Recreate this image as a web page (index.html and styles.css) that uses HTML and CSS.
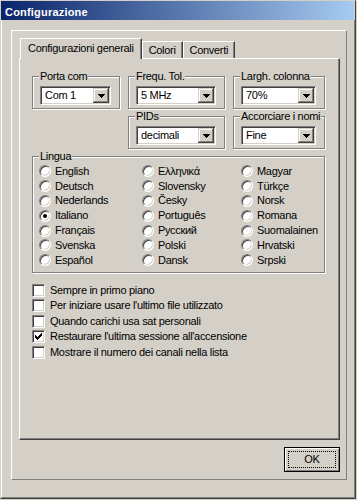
FILE: index.html
```html
<!DOCTYPE html>
<html lang="it">
<head>
    <meta charset="UTF-8">
    <meta name="viewport" content="width=device-width, initial-scale=1.0">
    <title>Configurazione</title>
    <link rel="stylesheet" href="styles.css">
</head>
<body>
    <div class="window">
        <div class="titlebar">Configurazione</div>

        <div class="client">
            <div class="sheet">
                <!-- Tab strip -->
                <div class="tabs">
                    <div class="tab active">Configurazioni generali</div>
                    <div class="tab">Colori</div>
                    <div class="tab">Converti</div>
                </div>

                <div class="page">
                    <div class="general">
                        <div class="combos">
                            <fieldset class="group">
                                <legend>Porta com</legend>
                                <div class="group-body">
                                    <div class="combo"><span class="value">Com 1</span><span class="drop"><svg width="7" height="4" viewBox="0 0 7 4"><rect x="0" y="0" width="7" height="1"/><rect x="1" y="1" width="5" height="1"/><rect x="2" y="2" width="3" height="1"/><rect x="3" y="3" width="1" height="1"/></svg></span></div>
                                </div>
                            </fieldset>
                            <fieldset class="group">
                                <legend>Frequ. Tol.</legend>
                                <div class="group-body">
                                    <div class="combo"><span class="value">5 MHz</span><span class="drop"><svg width="7" height="4" viewBox="0 0 7 4"><rect x="0" y="0" width="7" height="1"/><rect x="1" y="1" width="5" height="1"/><rect x="2" y="2" width="3" height="1"/><rect x="3" y="3" width="1" height="1"/></svg></span></div>
                                </div>
                            </fieldset>
                            <fieldset class="group">
                                <legend>Largh. colonna</legend>
                                <div class="group-body">
                                    <div class="combo"><span class="value">70%</span><span class="drop"><svg width="7" height="4" viewBox="0 0 7 4"><rect x="0" y="0" width="7" height="1"/><rect x="1" y="1" width="5" height="1"/><rect x="2" y="2" width="3" height="1"/><rect x="3" y="3" width="1" height="1"/></svg></span></div>
                                </div>
                            </fieldset>
                            <fieldset class="group pids">
                                <legend>PIDs</legend>
                                <div class="group-body">
                                    <div class="combo"><span class="value">decimali</span><span class="drop"><svg width="7" height="4" viewBox="0 0 7 4"><rect x="0" y="0" width="7" height="1"/><rect x="1" y="1" width="5" height="1"/><rect x="2" y="2" width="3" height="1"/><rect x="3" y="3" width="1" height="1"/></svg></span></div>
                                </div>
                            </fieldset>
                            <fieldset class="group">
                                <legend>Accorciare i nomi</legend>
                                <div class="group-body">
                                    <div class="combo"><span class="value">Fine</span><span class="drop"><svg width="7" height="4" viewBox="0 0 7 4"><rect x="0" y="0" width="7" height="1"/><rect x="1" y="1" width="5" height="1"/><rect x="2" y="2" width="3" height="1"/><rect x="3" y="3" width="1" height="1"/></svg></span></div>
                                </div>
                            </fieldset>
                        </div>

                        <fieldset class="group lingua">
                            <legend>Lingua</legend>
                            <div class="radios">
                                <label class="radio-row"><span class="radio"></span>English</label>
                                <label class="radio-row"><span class="radio"></span>Deutsch</label>
                                <label class="radio-row"><span class="radio"></span>Nederlands</label>
                                <label class="radio-row"><span class="radio checked"></span>Italiano</label>
                                <label class="radio-row"><span class="radio"></span>Français</label>
                                <label class="radio-row"><span class="radio"></span>Svenska</label>
                                <label class="radio-row"><span class="radio"></span>Español</label>

                                <label class="radio-row"><span class="radio"></span>Ελληνικά</label>
                                <label class="radio-row"><span class="radio"></span>Slovensky</label>
                                <label class="radio-row"><span class="radio"></span>Česky</label>
                                <label class="radio-row"><span class="radio"></span>Português</label>
                                <label class="radio-row"><span class="radio"></span>Русский</label>
                                <label class="radio-row"><span class="radio"></span>Polski</label>
                                <label class="radio-row"><span class="radio"></span>Dansk</label>

                                <label class="radio-row"><span class="radio"></span>Magyar</label>
                                <label class="radio-row"><span class="radio"></span>Türkçe</label>
                                <label class="radio-row"><span class="radio"></span>Norsk</label>
                                <label class="radio-row"><span class="radio"></span>Romana</label>
                                <label class="radio-row"><span class="radio"></span>Suomalainen</label>
                                <label class="radio-row"><span class="radio"></span>Hrvatski</label>
                                <label class="radio-row"><span class="radio"></span>Srpski</label>
                            </div>
                        </fieldset>

                        <div class="checks">
                            <label class="check-row"><span class="check"></span>Sempre in primo piano</label>
                            <label class="check-row"><span class="check"></span>Per iniziare usare l'ultimo file utilizzato</label>
                            <label class="check-row"><span class="check"></span>Quando carichi usa sat personali</label>
                            <label class="check-row"><span class="check"><svg width="7" height="7" viewBox="0 0 7 7" shape-rendering="crispEdges"><path d="M6 0h1v3h-1v1h-1v1h-1v1h-1v1h-1v-1h-1v-1h-1v-3h1v1h1v1h1v-1h1v-1h1z"/></svg></span>Restaurare l'ultima sessione all'accensione</label>
                            <label class="check-row"><span class="check"></span>Mostrare il numero dei canali nella lista</label>
                        </div>
                    </div>
                </div>

                <div class="buttons">
                    <button class="btn default"><span>OK</span></button>
                </div>
            </div>
        </div>
    </div>
</body>
</html>
```

FILE: styles.css
```css
body {
    margin: 0;
    background-color: #d4d0c8;
    font-family: "Liberation Sans", Arial, sans-serif;
    font-size: 11px;
    line-height: 13px;
    letter-spacing: -0.3px;
    color: #000;
}

.window {
    width: 356px;
    height: 499px;
    box-sizing: border-box;
    display: flex;
    flex-direction: column;
    border: 1px solid;
    border-color: #d4d0c8 #404040 #404040 #d4d0c8;
    background-color: #d4d0c8;
}

.titlebar {
    height: 19px;
    box-sizing: border-box;
    margin-right: 1px;
    padding: 3px 0 0 4px;
    line-height: 16px;
    font-weight: bold;
    letter-spacing: 0.2px;
    color: #fff;
    background: linear-gradient(to right, #0a246a, #a6caf0);
}

.client {
    flex: 1;
    display: flex;
    padding: 10px 7px 17px 9px;
    border-left: 1px solid #fff;
    border-right: 1px solid #808080;
    border-bottom: 1px solid #808080;
}

.sheet {
    flex: 1;
    display: flex;
    flex-direction: column;
    padding: 7px 6px 7px 7px;
    border: 1px solid;
    border-color: #fff #808080 #808080 #fff;
}

/* tabs */
.tabs {
    display: flex;
    align-items: flex-end;
    height: 20px;
    padding-left: 1px;
}

.tab {
    height: 17px;
    box-sizing: border-box;
    padding: 2px 6px 0;
    border: 1px solid;
    border-bottom: 0;
    border-color: #fff #404040 transparent #fff;
    box-shadow: inset -1px 0 #808080;
}

.tab.active {
    height: 21px;
    margin-bottom: -1px;
    padding: 3px 7px 0;
    position: relative;
    z-index: 1;
    background-color: #d4d0c8;
}

.page {
    flex: 1;
    padding: 11px 0 0 12px;
    border: 1px solid;
    border-color: #fff #404040 #404040 #fff;
    box-shadow: inset -1px -1px #808080;
}

.general {
    width: 293px;
}

/* group boxes */
.group {
    margin: 0;
    padding: 0;
    min-width: 0;
    border: 1px solid #808080;
    box-shadow: inset 1px 1px #fff, 1px 1px #fff;
}

.group legend {
    margin-left: 6px;
    padding: 0 1px;
    line-height: 13px;
    background-color: #d4d0c8;
}

.group-body {
    padding: 3px 8px 3px 7px;
}

.combos {
    display: grid;
    grid-template-columns: 88px 97px 92px;
    column-gap: 8px;
    row-gap: 1px;
}

.pids {
    grid-column: 2;
}

.combo {
    height: 19px;
    box-sizing: border-box;
    display: flex;
    border: 1px solid;
    border-color: #808080 #fff #fff #808080;
    box-shadow: inset 1px 1px #404040, inset -1px -1px #d4d0c8;
    background-color: #fff;
    padding: 1px;
}

.combo .value {
    flex: 1;
    padding-left: 3px;
    line-height: 15px;
}

.drop {
    width: 16px;
    height: 15px;
    display: flex;
    align-items: center;
    justify-content: center;
    background-color: #d4d0c8;
    box-shadow: inset -1px -1px #404040, inset 1px 1px #d4d0c8, inset -2px -2px #808080, inset 2px 2px #fff;
}

.drop svg {
    display: block;
    margin-top: 1px;
}

/* language radios */
.lingua {
    margin-top: 1px;
}

.radios {
    display: grid;
    grid-template-columns: 103px 99px 1fr;
    grid-template-rows: repeat(7, 14.8px);
    grid-auto-flow: column;
    padding: 1px 0 4px 6px;
}

.radio-row {
    display: flex;
    align-items: center;
    gap: 4px;
    white-space: nowrap;
}

.radio {
    width: 12px;
    height: 12px;
    box-sizing: border-box;
    flex: none;
    display: flex;
    align-items: center;
    justify-content: center;
    border-radius: 50%;
    border: 1px solid;
    border-color: #808080 #fff #fff #808080;
    box-shadow: inset 1px 1px #404040, inset -1px -1px #d4d0c8;
    background-color: #fff;
}

.radio.checked::after {
    content: "";
    width: 4px;
    height: 4px;
    border-radius: 50%;
    background-color: #000;
}

/* check boxes */
.checks {
    margin-top: 10px;
}

.check-row {
    display: flex;
    align-items: center;
    gap: 5px;
    height: 15.5px;
    white-space: nowrap;
}

.check {
    width: 13px;
    height: 13px;
    box-sizing: border-box;
    flex: none;
    display: flex;
    align-items: center;
    justify-content: center;
    border: 1px solid;
    border-color: #808080 #fff #fff #808080;
    box-shadow: inset 1px 1px #404040, inset -1px -1px #d4d0c8;
    background-color: #fff;
}

.check svg {
    display: block;
}

/* buttons */
.buttons {
    display: flex;
    justify-content: flex-end;
    margin-top: 7px;
}

.btn {
    width: 56px;
    height: 25px;
    box-sizing: border-box;
    display: flex;
    padding: 3px;
    margin: 0;
    font: inherit;
    letter-spacing: inherit;
    color: #000;
    background-color: #d4d0c8;
    border: 1px solid #000;
    box-shadow: inset 1px 1px #fff, inset -1px -1px #808080;
}

.btn span {
    flex: 1;
    display: flex;
    align-items: center;
    justify-content: center;
    border: 1px dotted #000;
}
```
